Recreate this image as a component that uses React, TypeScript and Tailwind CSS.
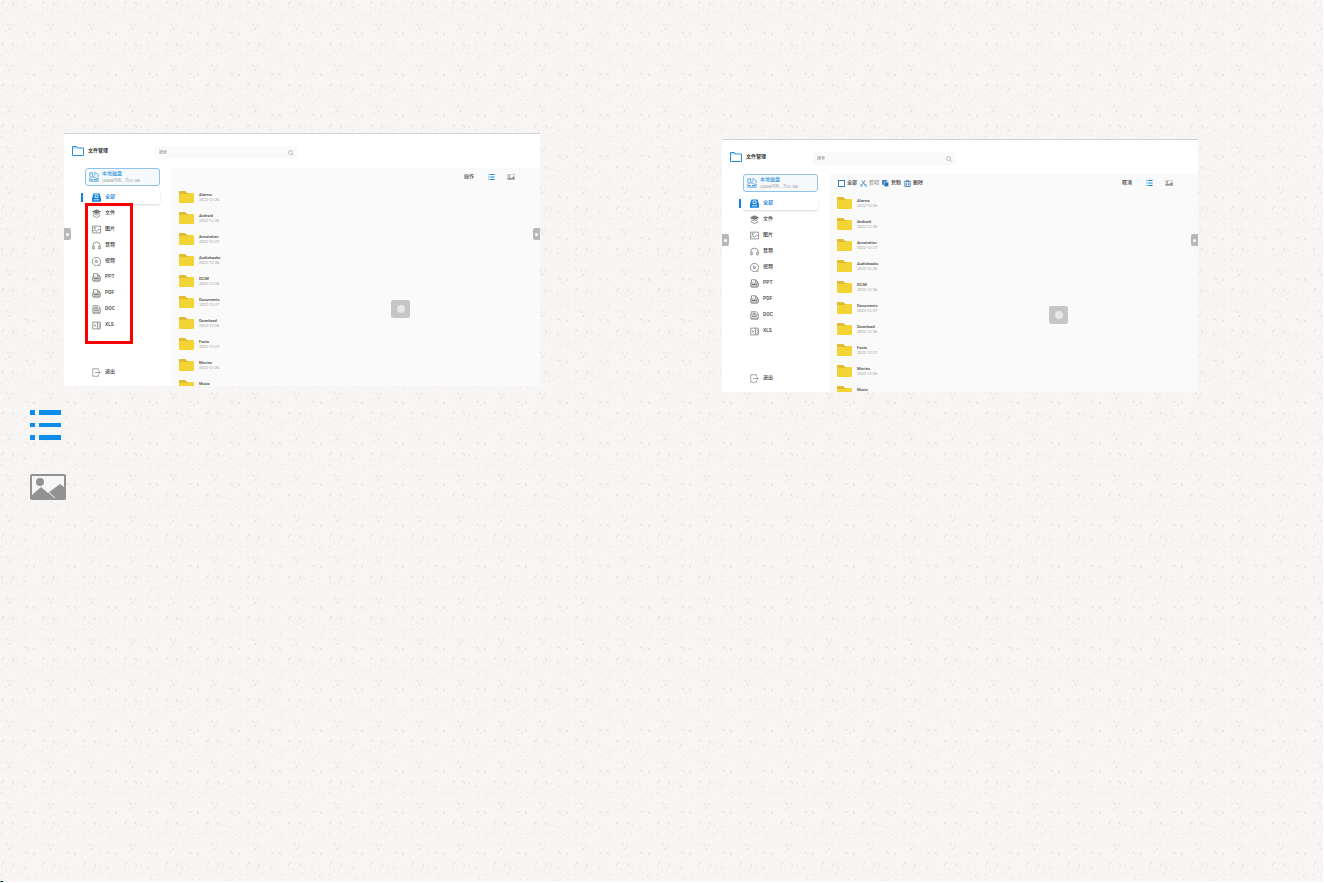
import { clsx } from "clsx"
import type { ReactNode } from "react"

type IconProps = { className?: string }

const Line = ({ className, children }: IconProps & { children: ReactNode }) => (
  <svg
    viewBox="0 0 24 24"
    className={clsx("shrink-0", className)}
    fill="none"
    stroke="currentColor"
    strokeWidth="2"
    strokeLinejoin="round"
    aria-hidden="true"
  >
    {children}
  </svg>
)

const DriveIcon = () => (
  <Line className="size-[9px]">
    <path d="M4 1h16l4 13v9H0v-9z" fill="currentColor" stroke="none" />
    <path d="M8 12V5h8v7zM5 18h14" stroke="#fff" />
  </Line>
)

const LayersIcon = () => (
  <Line className="size-[9px]">
    <path d="M12 2 1 7l11 5 11-5z" fill="currentColor" />
    <path d="m3 12 9 4 9-4M4 16v3l8 4 8-4v-3" />
  </Line>
)

const PictureIcon = () => (
  <Line className="size-[9px]">
    <path d="M1 3h22v18H1zM1 17l6-4 5 4 6-6 5 3" />
    <circle cx="7" cy="8" r="2" />
  </Line>
)

const HeadphonesIcon = () => (
  <Line className="size-[9px]">
    <path d="M2 21v-8a10 10 0 0 1 20 0v8M2 14h4v7H2M22 14h-4v7h4" />
  </Line>
)

const VideoIcon = () => (
  <Line className="size-[9px]">
    <circle cx="12" cy="12" r="11" />
    <path d="m10 8 6 4-6 4zM18 22h5" />
  </Line>
)

const PageIcon = () => (
  <Line className="size-[9px]">
    <path d="M4 11V2h11l5 5v4M15 2v6h5M1 11h22v8H1zM4 19v3h16v-3" />
    <path d="M4 15h16" strokeWidth="3" />
  </Line>
)

const DocIcon = () => (
  <Line className="size-[9px]">
    <path d="M3 10V2h14l4 4v4M2 10h20v9H2zM3 19v3h18v-3" />
    <path d="M5 14h14M7 6h8" strokeWidth="3" />
  </Line>
)

const SheetIcon = () => (
  <Line className="size-[9px]">
    <path d="M15 3H2v18h13zM15 3h7v18h-7M6 9l5 6M11 9l-5 6M18 9h4M18 15h4" />
  </Line>
)

const ExitIcon = () => (
  <Line className="size-[9px]">
    <path d="M17 7V2H2v20h15v-5M8 12h14M18 8l4 4-4 4" />
  </Line>
)

const SearchIcon = () => (
  <Line className="size-1.5 text-[#888]">
    <circle cx="10" cy="10" r="8" />
    <path d="m16 16 7 7" />
  </Line>
)

const HeaderFolder = () => (
  <svg viewBox="0 0 24 20" className="h-2.5 w-3 shrink-0" fill="none" stroke="#2b8edb" strokeWidth="2" aria-hidden="true">
    <path d="M1 19V1h8l2 3h12v15z" />
    <path d="M1 4h10" strokeWidth="1" />
  </svg>
)

const DiskIcon = () => (
  <Line className="size-2.5 text-[#3d9bdc]">
    <path d="M2 11V2h7v9M12 2h5l5 5v5M12 7h4M2 14v8h20v-7h-5l-3-3H2" />
    <path d="M4 18h5M12 18h7" strokeWidth="3" />
  </Line>
)

const ListGlyph = ({ className }: IconProps) => (
  <svg viewBox="0 0 31 30" className={clsx("shrink-0", className)} fill="#0c8ceb" aria-hidden="true">
    <path d="M0 0h5v5H0zM9 0h22v5H9zM0 13h5v4H0zM9 13h22v4H9zM0 25h5v5H0zM9 25h22v5H9z" />
  </svg>
)

const ImageGlyph = ({ className }: IconProps) => (
  <svg viewBox="0 0 36 26" className={clsx("shrink-0", className)} aria-hidden="true">
    <rect x="1" y="1" width="34" height="24" rx="1" fill="#f8f6f4" stroke="#929292" strokeWidth="2" />
    <circle cx="10" cy="8" r="4" fill="#929292" />
    <path d="M2 21 11 13l7 6 12-9 4 3v11H2z" fill="#929292" />
    <path d="m17 17 8 7" stroke="#f8f6f4" strokeWidth="1" />
  </svg>
)

const FolderGlyph = () => (
  <svg viewBox="0 0 15 12" className="h-3 w-[15px] shrink-0" aria-hidden="true">
    <path d="M0 1q0-1 1-1h5l2 2h6q1 0 1 1v8q0 1-1 1H1q-1 0-1-1z" fill="#f2d434" />
    <path d="M0 1q0-1 1-1h5l2 2 2 1H0z" fill="#e2ba34" />
  </svg>
)

const CutGlyph = () => (
  <Line className="size-[7px]">
    <path d="M6 1l12 17M18 1 6 18" strokeWidth="3" />
    <circle cx="4" cy="19" r="3" />
    <circle cx="20" cy="19" r="3" />
  </Line>
)

const CopyGlyph = () => (
  <Line className="size-[7px]">
    <path d="M1 1h15v15H1z" fill="currentColor" />
    <path d="M7 7h16v16H7z" fill="currentColor" stroke="#fafafa" />
  </Line>
)

const TrashGlyph = () => (
  <Line className="size-[7px]">
    <path d="M0 6h24M8 5V1h8v4M3 9v13h18V9M9 11v7M15 11v7" strokeWidth="3" />
  </Line>
)

const categories = [
  { label: "全部", icon: <DriveIcon /> },
  { label: "文件", icon: <LayersIcon /> },
  { label: "图片", icon: <PictureIcon /> },
  { label: "音频", icon: <HeadphonesIcon /> },
  { label: "视频", icon: <VideoIcon /> },
  { label: "PPT", icon: <PageIcon /> },
  { label: "PDF", icon: <PageIcon /> },
  { label: "DOC", icon: <DocIcon /> },
  { label: "XLS", icon: <SheetIcon /> },
]

const files = [
  { name: "Alarms", date: "2022-12-26" },
  { name: "Android", date: "2022-12-26" },
  { name: "Annotation", date: "2022-12-27" },
  { name: "Audiobooks", date: "2022-12-26" },
  { name: "DCIM", date: "2022-12-26" },
  { name: "Documents", date: "2022-12-27" },
  { name: "Download", date: "2022-12-26" },
  { name: "Fonts", date: "2022-12-27" },
  { name: "Movies", date: "2022-12-26" },
  { name: "Music" },
]

const Sidebar = () => (
  <aside className="flex w-[107px] shrink-0 flex-col bg-white pr-[11px] pb-1.5">
    <div className="ml-[21px] flex h-[18px] items-center gap-[3px] rounded-[3px] border border-[#8fc3ea] bg-[#f7fafc] pl-[3px]">
      <DiskIcon />
      <div className="whitespace-nowrap">
        <p className="text-[5px] leading-[7px] font-medium text-[#3d9bdc]">本地磁盘</p>
        <p className="text-[4px] leading-[7px] text-[#999]">(34GB可用，共51 GB</p>
      </div>
    </div>
    <nav className="mt-[3px] ml-[17px]">
      {categories.map(({ label, icon }, i) => (
        <button
          key={label}
          type="button"
          className={clsx("flex h-4 w-full items-center gap-0.5", i === 0 ? "text-[#1583dc]" : "text-[#777]")}
        >
          <span className={clsx("h-[9px] w-0.5", i === 0 && "bg-[#1b7fd0]")} />
          <span
            className={clsx(
              "flex h-3.5 flex-1 items-center gap-1 rounded-xs pl-[7px]",
              i === 0 && "bg-white shadow-[0_1px_2px_#d8d8d8]",
            )}
          >
            {icon}
            <span className={clsx("text-[5px] font-medium", i > 0 && "text-[#444]")}>{label}</span>
          </span>
        </button>
      ))}
    </nav>
    <button type="button" className="mt-auto ml-7 flex h-4 items-center gap-1 text-[#888]">
      <ExitIcon />
      <span className="text-[5px] font-medium text-[#444]">退出</span>
    </button>
  </aside>
)

const EditTools = () => (
  <div className="flex items-center gap-[3px] text-[5px] font-medium text-[#444]">
    <label className="flex items-center gap-0.5">
      <input type="checkbox" className="size-[7px] appearance-none border border-[#3b7fc0] bg-white" />
      全部
    </label>
    <button type="button" className="flex items-center gap-0.5 text-[#888]">
      <span className="text-[#3b7fc0]">
        <CutGlyph />
      </span>
      剪切
    </button>
    <button type="button" className="flex items-center gap-0.5">
      <span className="text-[#2c6fb4]">
        <CopyGlyph />
      </span>
      复制
    </button>
    <button type="button" className="flex items-center gap-0.5">
      <span className="text-[#2c6fb4]">
        <TrashGlyph />
      </span>
      删除
    </button>
  </div>
)

const EdgeTab = ({ className }: IconProps) => (
  <button
    type="button"
    aria-label="展开"
    className={clsx("absolute top-[94px] flex h-3 w-[7px] items-center justify-center bg-[#b8b8b8]", className)}
  >
    <span className="size-[3px] rounded-full bg-white" />
  </button>
)

const FileManager = ({ editing = false }: { editing?: boolean }) => (
  <section className="relative flex h-[253px] w-full max-w-[476px] flex-col overflow-hidden border-t border-[#d2d2d2] bg-white">
    <header className="flex h-[34px] shrink-0 items-center pb-px pl-2">
      <HeaderFolder />
      <h2 className="ml-1 w-[67px] text-[5px] font-bold text-[#333]">文件管理</h2>
      <label className="mt-1 flex h-[13px] w-[143px] items-center rounded-xs bg-[#fafafa] px-1">
        <input
          type="search"
          aria-label="搜索"
          placeholder="搜索"
          className="min-w-0 flex-1 text-[4px] outline-none placeholder:text-[#888]"
        />
        <SearchIcon />
      </label>
    </header>
    <div className="flex min-h-0 flex-1">
      <Sidebar />
      <div className="min-w-0 flex-1 bg-[#fafafa] pl-2">
        <div className="flex h-[18px] items-center justify-between pr-[25px] pl-px">
          {editing ? <EditTools /> : <span />}
          <div className="flex items-center gap-3">
            <button type="button" className="mr-0.5 text-[5px] font-medium text-[#444]">
              {editing ? "取消" : "操作"}
            </button>
            <button type="button" aria-label="列表">
              <ListGlyph className="h-1.5 w-[7px]" />
            </button>
            <button type="button" aria-label="缩略图">
              <ImageGlyph className="h-1.5 w-2" />
            </button>
          </div>
        </div>
        <ul>
          {files.map(({ name, date }) => (
            <li key={name} className="flex h-[21px] items-center gap-[5px]">
              <FolderGlyph />
              <div className="h-2.5 text-[4px] leading-[5px]">
                <p className="font-medium text-[#444]">{name}</p>
                {date && <p className="text-[#999]">{date}</p>}
              </div>
            </li>
          ))}
        </ul>
      </div>
    </div>
    <EdgeTab className="left-0 rounded-r-xs" />
    <EdgeTab className="right-0 rounded-l-xs" />
    <button
      type="button"
      aria-label="主页"
      className="absolute top-[166px] left-[327px] flex h-[18px] w-[19px] items-center justify-center rounded-xs bg-[#c6c6c6]"
    >
      <span className="size-2 rounded-full bg-[#e6e6e6]" />
    </button>
  </section>
)

const TILE = 41

// short random fibres, seeded so that the paper looks the same on every load
const fibres = (count: number, start: number) => {
  let seed = start
  const next = (range: number) => {
    seed = (seed * 16807) % 2147483647
    return seed % range
  }
  return Array.from({ length: count }, () => {
    const x = 2 + next(TILE - 5)
    const y = 2 + next(TILE - 5)
    return `M${x} ${y}q${next(5) - 2} ${next(5) - 2} ${next(5) - 2} ${next(5) - 2}`
  }).join("")
}

const light = fibres(60, 911)
const soft = fibres(90, 4703)
const mid = fibres(16, 77121)
const dark = fibres(5, 30211)

const PaperTexture = () => (
  <svg className="absolute inset-0 size-full" aria-hidden="true">
    <defs>
      <pattern id="paper" width={TILE} height={TILE} patternUnits="userSpaceOnUse">
        <rect width={TILE} height={TILE} fill="#f8f6f5" />
        <g fill="none" strokeWidth="1">
          <path stroke="#f4f1ef" d={soft} />
          <path stroke="#fbf9f8" d={light} />
          <path stroke="#ece8e6" d={mid} />
          <path stroke="#dfdbd9" d={dark} />
        </g>
      </pattern>
    </defs>
    <rect width="100%" height="100%" fill="url(#paper)" />
  </svg>
)

export default function App() {
  return (
    <main className="relative min-h-screen bg-white font-['Roboto','Noto_Sans_CJK_SC',sans-serif]">
      <div className="absolute top-0 right-px bottom-px left-0">
        <PaperTexture />
      </div>
      <div className="relative grid grid-cols-2">
        <div className="pt-[133px]">
          <div className="relative ml-16">
            <FileManager />
            <div className="absolute top-[70px] left-[21px] h-[141px] w-12 border-3 border-[#fb0000]" />
          </div>
          <div className="mt-6 ml-[30px] flex flex-col items-start gap-[34px]">
            <ListGlyph className="h-[30px] w-[31px]" />
            <ImageGlyph className="h-[26px] w-9" />
          </div>
        </div>
        <div className="pt-[139px] pl-[60px]">
          <FileManager editing />
        </div>
      </div>
      <div className="absolute bottom-px left-0 flex h-px">
        <span className="w-px bg-[#00c800]" />
        <span className="w-0.5 bg-[#0000a0]" />
      </div>
    </main>
  )
}
